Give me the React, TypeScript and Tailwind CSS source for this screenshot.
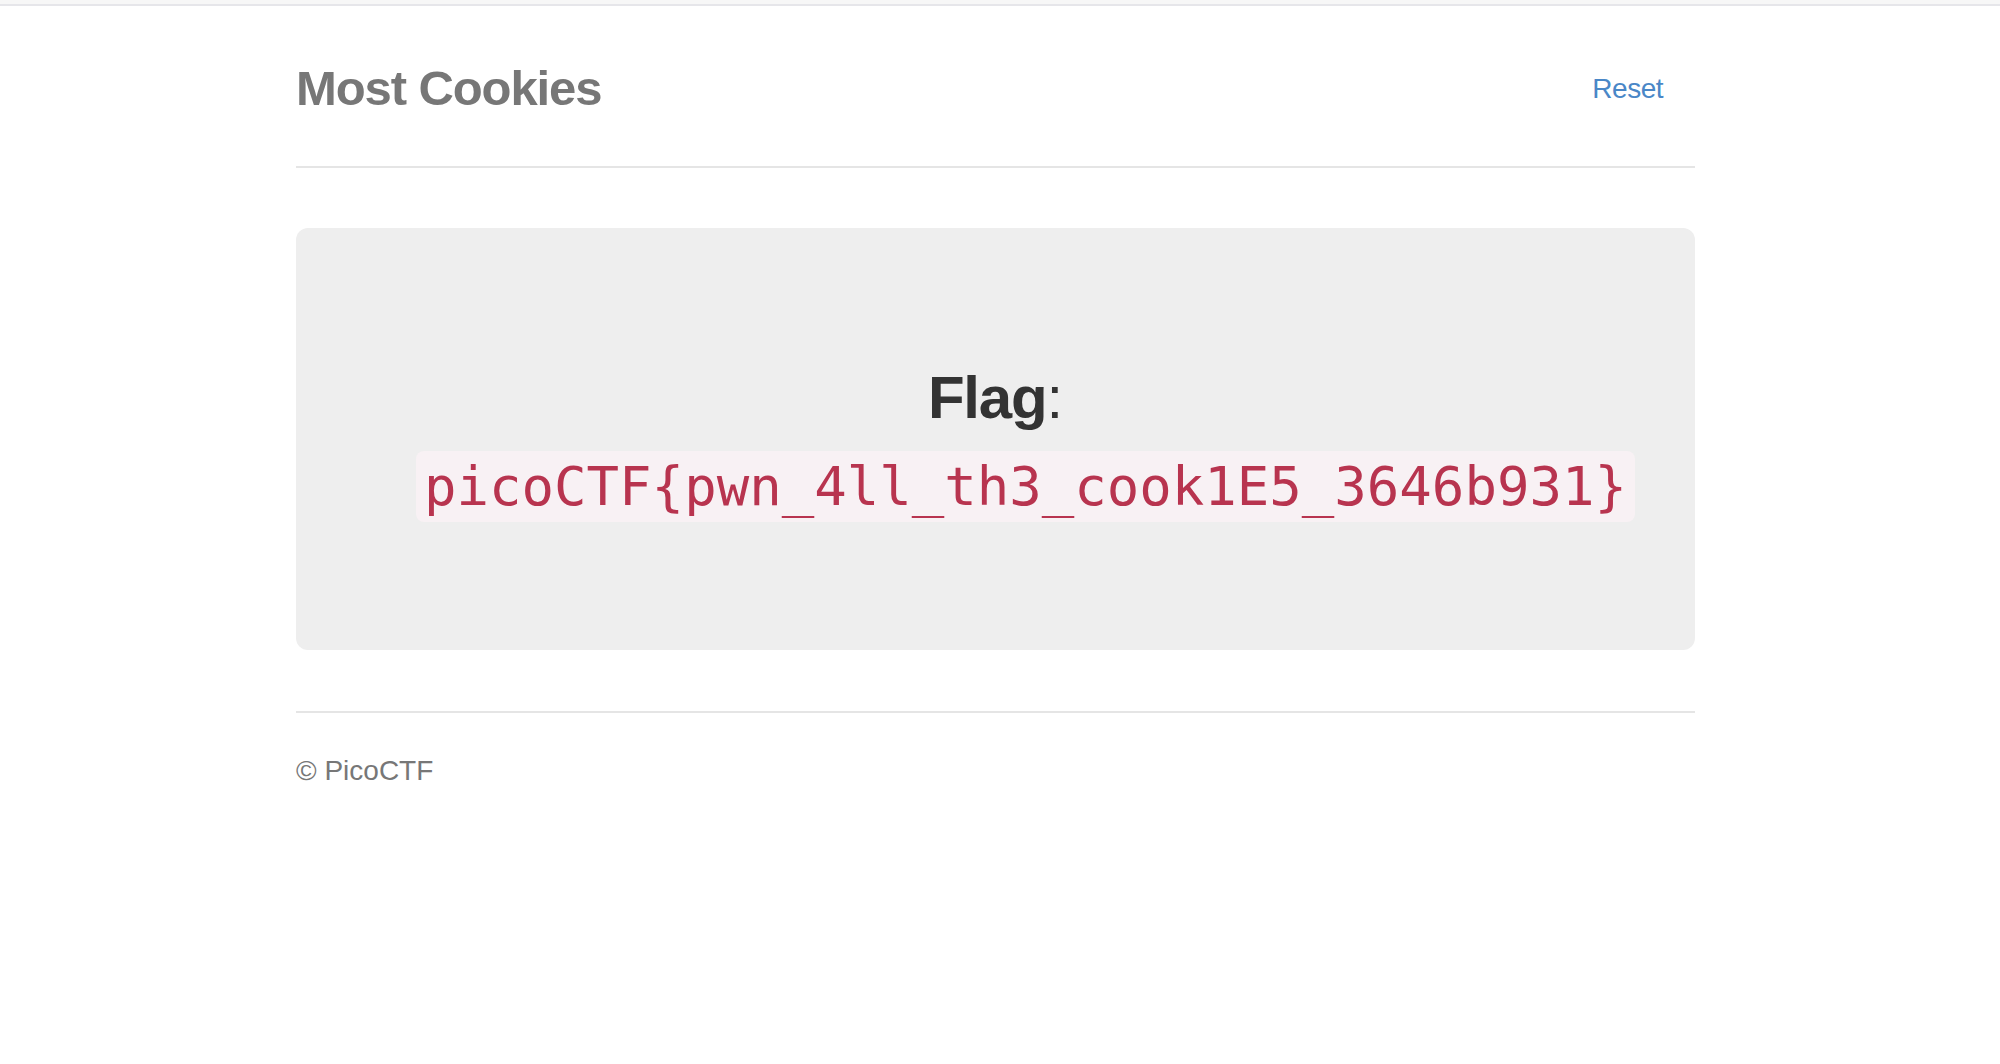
import React from "react";

export default function App() {
  const sans = { fontFamily: '"Liberation Sans", Arial, Helvetica, sans-serif' };
  return (
    <div className="min-h-[1064px] w-[2000px] bg-white" style={sans}>
      <div className="h-[6px] bg-[#f7f7f7] border-b-2 border-[#e6e6ea]" />
      <div className="ml-[296px] w-[1399px]">
        <div className="flex items-start justify-between pt-[58px]">
          <h3
            className="m-0 text-[49px] leading-none font-bold tracking-[-1.1px] text-[#777777]"
            style={sans}
          >
            Most Cookies
          </h3>
          <a
            href="#"
            className="mt-[11px] mr-[32px] text-[28px] leading-none tracking-[-0.5px] text-[#4a87c7]"
          >
            Reset
          </a>
        </div>
        <div className="mt-[53px] h-[2px] bg-[#e5e5e5]" />
        <div className="mt-[60px] h-[422px] rounded-[12px] bg-[#eeeeee] pt-[140px]">
          <div className="flex justify-center text-[60px] leading-none text-[#333333]">
            <span>
              <b className="font-bold tracking-[-1.2px]">Flag</b>:
            </span>
          </div>
          <div className="mt-[23px] flex justify-center pl-[60px]">
            <code
              className="rounded-[8px] bg-[#f8f1f4] px-[8px] py-[4px] text-[54px] leading-[63px] text-[#b8344f]"
              style={{ fontFamily: '"DejaVu Sans Mono", Menlo, monospace' }}
            >
              picoCTF{"{"}pwn_4ll_th3_cook1E5_3646b931{"}"}
            </code>
          </div>
        </div>
        <div className="mt-[61px] h-[2px] bg-[#e5e5e5]" />
        <div className="mt-[44px] text-[28px] leading-none text-[#777777]">
          © PicoCTF
        </div>
      </div>
    </div>
  );
}
